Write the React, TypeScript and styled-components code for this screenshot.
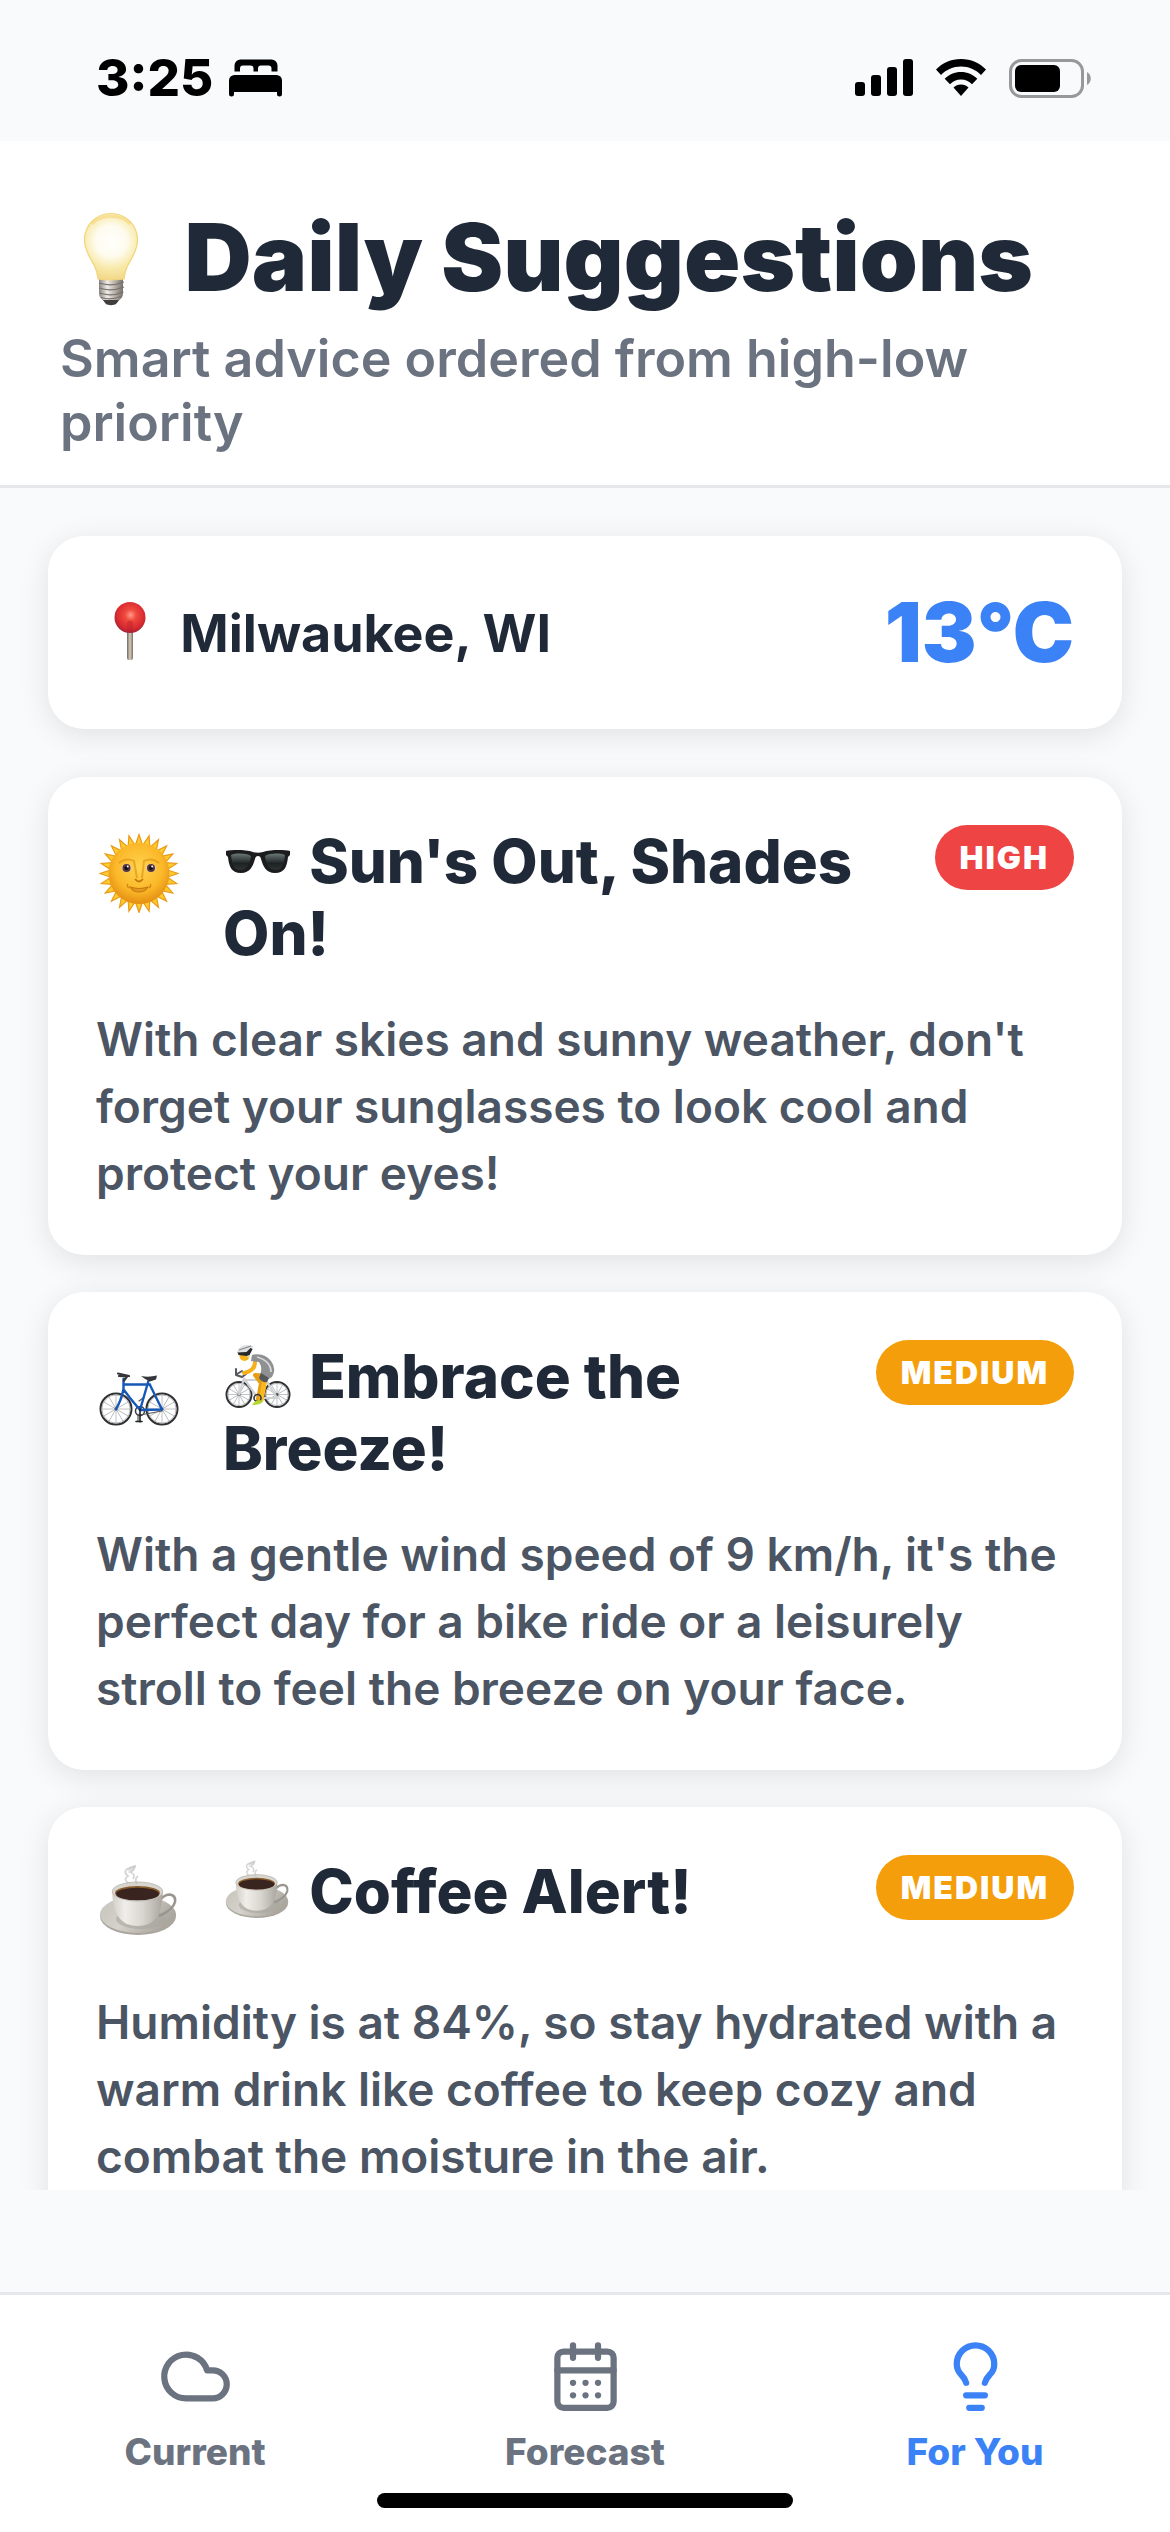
import React from "react";
import styled, { createGlobalStyle } from "styled-components";
import { CalendarDays, Cloud, Lightbulb } from "lucide-react";

const GlobalStyle = createGlobalStyle`
  *, *::before, *::after { box-sizing: border-box; }
  body {
    margin: 0;
    background: #f8fafc;
    font-family: Inter, "Noto Sans", sans-serif;
    color: #1f2937;
  }
  h1, h2, p, ul { margin: 0; padding: 0; }
`;

const Screen = styled.div`
  display: flex;
  flex-direction: column;
  height: 100vh;
  background: #f8fafc;
`;

/* ---------- status bar ---------- */

const StatusBar = styled.div`
  display: flex;
  align-items: center;
  justify-content: space-between;
  flex: none;
  height: 141px;
  padding: 15px 78px 0 96px;
  color: #000;
`;

const StatusGroup = styled.div<{ $gap: number }>`
  display: flex;
  align-items: center;
  gap: ${(p) => p.$gap}px;
`;

const Clock = styled.time`
  font-size: 51px;
  line-height: 60px;
  font-weight: 800;
`;

/* ---------- header ---------- */

const Header = styled.header`
  flex: none;
  padding: 58px 60px 30px;
  background: #fff;
  border-bottom: 3px solid #e5e7eb;
`;

const PageTitle = styled.h1`
  font-size: 93px;
  line-height: 116px;
  font-weight: 900;
`;

const Subtitle = styled.p`
  margin-top: 12px;
  font-size: 52px;
  line-height: 64px;
  font-weight: 600;
  color: #6b7280;
`;

/* ---------- content ---------- */

const Content = styled.main`
  flex: 1;
  min-height: 0;
  margin-bottom: 102px;
  padding: 48px;
  overflow-y: auto;
  scrollbar-width: none;
`;

const Panel = styled.section`
  padding: 48px;
  border-radius: 36px;
  background: #fff;
  box-shadow: 0 6px 30px rgba(0, 0, 0, 0.1);
`;

const LocationPanel = styled(Panel)`
  display: flex;
  align-items: center;
  justify-content: space-between;
  margin-bottom: 48px;
`;

const Place = styled.p`
  font-size: 52px;
  line-height: 64px;
  font-weight: 700;
`;

const Temperature = styled.p`
  font-size: 82px;
  line-height: 97px;
  font-weight: 900;
  color: #3b82f6;
`;

const Suggestions = styled.ul`
  display: flex;
  flex-direction: column;
  gap: 37px;
  list-style: none;
`;

const CardHead = styled.div`
  display: flex;
  align-items: flex-start;
  gap: 36px;
  margin-bottom: 37px;
`;

const CardIcon = styled.span`
  display: block;
  flex: none;
  padding: 8px 8px 9px 3px;

  svg { display: block; }
`;

const CardTitle = styled.h2`
  flex: 1;
  font-size: 60px;
  line-height: 72px;
  font-weight: 800;
`;

const Badge = styled.span<{ $color: string }>`
  flex: none;
  padding: 12px 25px;
  border-radius: 36px;
  background: ${(p) => p.$color};
  color: #fff;
  font-size: 32px;
  line-height: 41px;
  font-weight: 900;
  letter-spacing: 2px;
`;

const CardText = styled.p`
  font-size: 46px;
  line-height: 67px;
  font-weight: 600;
  color: #4b5563;
`;

const TitleEmoji = styled.svg<{ $drop: number }>`
  vertical-align: -${(p) => p.$drop}px;
`;

/* ---------- tab bar ---------- */

const TabBar = styled.nav`
  flex: none;
  background: #fff;
  border-top: 3px solid #e5e7eb;
`;

const Tabs = styled.div`
  display: grid;
  grid-template-columns: repeat(3, 1fr);
  padding-top: 44px;
`;

const Tab = styled.a<{ $active?: boolean }>`
  display: flex;
  flex-direction: column;
  align-items: center;
  gap: 16px;
  color: ${(p) => (p.$active ? "#3b82f6" : "#6b7280")};
  font-size: 37px;
  line-height: 44px;
  font-weight: 800;
  text-decoration: none;
`;

const HomeIndicator = styled.div`
  width: 416px;
  height: 15px;
  margin: 19px auto 24px;
  border-radius: 8px;
  background: #000;
`;

/* ---------- status glyphs ---------- */

const BedGlyph = () => (
  <svg width="53" height="38" viewBox="0 0 53 38" aria-hidden="true">
    <path d="M5.500 12.500V6.500a6 6 0 0 1 6-6h31a6 6 0 0 1 6 6v6h-6V9.500a3 3 0 0 0-3-3h-7.500a3 3 0 0 0-3 3v3h-4.500V9.500a3 3 0 0 0-3-3h-7.500a3 3 0 0 0-3 3v3z" />
    <path d="M0 21.500a5.500 5.500 0 0 1 5.500-5.500h42a5.500 5.500 0 0 1 5.500 5.500V35a2.500 2.500 0 0 1-5 0v-2H5v2a2.500 2.500 0 0 1-5 0z" />
  </svg>
);

const SignalGlyph = () => (
  <svg width="58" height="38" viewBox="0 0 58 38" aria-hidden="true">
    <rect x="0" y="23" width="10" height="14" rx="3" />
    <rect x="16" y="16" width="10" height="21" rx="3" />
    <rect x="32" y="8" width="10" height="29" rx="3" />
    <rect x="48" y="0" width="10" height="37" rx="3" />
  </svg>
);

const WifiGlyph = () => (
  <svg width="50" height="38" viewBox="0 0 50 38" aria-hidden="true">
    <path d="M25 0C35 0 43.500 4 50 10.500L45 16C39.500 10.500 33 7.500 25 7.500S10.500 10.500 5 16L0 10.500C6.500 4 15 0 25 0z" />
    <path d="M25 13c6.500 0 12 2.500 16.300 6.700L36 25.200c-3-3-6.500-4.700-11-4.700s-8 1.700-11 4.700l-5.300-5.500C13 15.500 18.500 13 25 13z" />
    <path d="M25 25.500c3 0 5.500 1 7.500 3L25 37l-7.500-8.500c2-2 4.500-3 7.500-3z" />
  </svg>
);

const BatteryGlyph = () => (
  <svg width="83" height="39" viewBox="0 0 83 39" aria-hidden="true">
    <rect x="1.500" y="1.500" width="72" height="36" rx="11" fill="none" stroke="#979899" strokeWidth="3" />
    <rect x="6" y="6" width="45" height="27" rx="6" />
    <path d="M78 13c5 2.500 5 10.500 0 13z" fill="#979899" />
  </svg>
);

/* ---------- emoji drawings ---------- */

const BulbEmoji = () => (
  <TitleEmoji $drop={16} width="106" height="96" viewBox="0 0 106 96" aria-hidden="true">
    <defs>
      <radialGradient id="glass" cx="51" cy="30" r="38" gradientUnits="userSpaceOnUse">
        <stop offset="0" stopColor="#fffefa" />
        <stop offset="0.4" stopColor="#fefcf0" />
        <stop offset="0.72" stopColor="#f8eaab" />
        <stop offset="1" stopColor="#f3d98a" />
      </radialGradient>
      <linearGradient id="screw" x1="0" x2="1">
        <stop offset="0" stopColor="#8b857f" />
        <stop offset="0.35" stopColor="#f0ece8" />
        <stop offset="0.65" stopColor="#b9b2ab" />
        <stop offset="1" stopColor="#77716c" />
      </linearGradient>
    </defs>
    <path d="M42 88h18l-4 5c-2 1.500-8 1.500-10 0z" fill="#3f3d3d" />
    <path d="M39 66h24v16c0 4-2 6-4 7H43c-2-1-4-3-4-7z" fill="url(#screw)" />
    <path d="M39 72q12 4 25-1M39 77q12 4 25-1M39.500 82q12 4 24-1M41 86.500q10 3 20-1" fill="none" stroke="#77716d" strokeWidth="1.300" />
    <path
      d="M51 2.500C66 2.500 77.500 14 77.500 29c0 11-6 18-10 26-2.500 5-3 9-3.500 13-7 1-19 1-26 0-.5-4-1-8-3.500-13-4-8-10-15-10-26C24.500 14 36 2.500 51 2.500z"
      fill="url(#glass)"
      stroke="#f2d57c"
      strokeWidth="1.200"
    />
    <path d="M32 13c8-10 30-10 38 0" fill="none" stroke="#f5cf6c" strokeWidth="3" opacity="0.45" />
  </TitleEmoji>
);

const PinEmoji = () => (
  <TitleEmoji $drop={10} width="72" height="62" viewBox="0 0 72 62" aria-hidden="true">
    <defs>
      <radialGradient id="pinHead" cx="0.52" cy="0.42" r="0.6">
        <stop offset="0" stopColor="#ff9a86" />
        <stop offset="0.3" stopColor="#f04a3f" />
        <stop offset="0.75" stopColor="#d8292f" />
        <stop offset="1" stopColor="#9c2338" />
      </radialGradient>
      <linearGradient id="needle" x1="0" x2="1">
        <stop offset="0" stopColor="#6d6862" />
        <stop offset="0.5" stopColor="#dccbbb" />
        <stop offset="1" stopColor="#77706a" />
      </linearGradient>
    </defs>
    <rect x="31" y="30" width="6" height="30" rx="2" fill="url(#needle)" />
    <circle cx="34" cy="17.500" r="15.500" fill="url(#pinHead)" />
    <path d="M31 32V22q3-3 6 0v10z" fill="#b9202f" opacity="0.45" />
  </TitleEmoji>
);

const RAYS = Array.from({ length: 24 }, (_, i) => {
  const at = (angle: number, radius: number) =>
    `${(40 + Math.sin(angle) * radius).toFixed(2)},${(40.5 - Math.cos(angle) * radius).toFixed(2)}`;
  const mid = (i * Math.PI) / 12;
  return `${at(mid - 0.12, 29)} ${at(mid, 39)} ${at(mid + 0.12, 29)}`;
});

const SunEmoji = () => (
  <svg width="80" height="80" viewBox="0 0 80 80" aria-hidden="true">
    <defs>
      <radialGradient id="sunFace" cx="0.5" cy="0.4" r="0.6">
        <stop offset="0" stopColor="#ffd34e" />
        <stop offset="0.65" stopColor="#fbb829" />
        <stop offset="1" stopColor="#e58e12" />
      </radialGradient>
    </defs>
    {RAYS.map((points) => (
      <polygon key={points} points={points} fill="#fdcb2e" stroke="#e99a17" strokeWidth="1.200" />
    ))}
    <circle cx="40" cy="40.500" r="30.500" fill="url(#sunFace)" />
    <path d="M20 30q7-6 15-2l3 17M60 30q-7-6-15-2l-2 17" fill="none" stroke="#db8e12" strokeWidth="2" opacity="0.6" />
    <path d="M36 46q4 5 8 0" fill="none" stroke="#c97a0c" strokeWidth="1.800" />
    <path d="M31 54q9 3 18 0-3 5-9 5t-9-5z" fill="#e29a25" stroke="#c97a0c" strokeWidth="1.200" />
    <path d="M29 51q-2 2 1 4M51 51q2 2-1 4" fill="none" stroke="#d48710" strokeWidth="1.200" />
    {[27.5, 52].map((x) => (
      <g key={x}>
        <ellipse cx={x} cy="35" rx="5.200" ry="4.300" fill="#e6c9a8" />
        <circle cx={x} cy="35" r="4" fill="#54363a" />
        <circle cx={x} cy="35" r="2" fill="#150d12" />
        <circle cx={x + 1.2} cy="33.500" r="1" fill="#fff" />
      </g>
    ))}
  </svg>
);

const ShadesEmoji = () => (
  <TitleEmoji $drop={10} width="73" height="64" viewBox="0 0 73 64" aria-hidden="true">
    <defs>
      <linearGradient id="lens" x1="0" y1="0" x2="0" y2="1">
        <stop offset="0" stopColor="#6b7675" />
        <stop offset="0.6" stopColor="#1d2223" />
        <stop offset="1" stopColor="#2d3333" />
      </linearGradient>
    </defs>
    <path
      d="M3 22c6-1.500 20-1.500 27 1q5 1.500 10 0c7-2.500 21-2.500 27-1v4l-2 2c-1 9-3 16-13 16-9 0-12-7-14-14q-.5-3-3-3t-3 3c-2 7-5 14-14 14-10 0-12-7-13-16l-2-2z"
      fill="#1c1c1e"
    />
    <path d="M8 26c5-2 15-2 20 1-1 8-4 14-11 14s-8-7-9-15zM62 26c-5-2-15-2-20 1 1 8 4 14 11 14s8-7 9-15z" fill="url(#lens)" />
  </TitleEmoji>
);

const Wheel = ({ cx, cy, r }: { cx: number; cy: number; r: number }) => (
  <g fill="none">
    <circle cx={cx} cy={cy} r={r - 1} stroke="#2f3032" strokeWidth="2" />
    <circle cx={cx} cy={cy} r={r - 2.4} stroke="#a3a5a7" strokeWidth="0.800" />
    {[0, 30, 60, 90, 120, 150].map((deg) => (
      <path
        key={deg}
        d={`M${cx - r + 2} ${cy}H${cx + r - 2}`}
        transform={`rotate(${deg} ${cx} ${cy})`}
        stroke="#9a9c9f"
        strokeWidth="0.600"
      />
    ))}
    <circle cx={cx} cy={cy} r="1.500" fill="#55575a" />
  </g>
);

const BikeEmoji = () => (
  <svg width="80" height="80" viewBox="0 0 80 80" aria-hidden="true">
    <Wheel cx={17} cy={61} r={16.5} />
    <Wheel cx={63} cy={61} r={16.5} />
    <g fill="none" strokeLinecap="round" strokeLinejoin="round">
      <circle cx="41" cy="63" r="4.500" stroke="#3b3c3f" strokeWidth="1.500" />
      <path d="M41 67L63 63M39 66v7M44 50l-4 3" stroke="#55575a" strokeWidth="1.200" />
      <path d="M17 61q5-8 7.500-20V31M25 36.500h26M25 42l6 8 10 12L50 31M51 37l12 24.500-22 .5" stroke="#1558b7" strokeWidth="2.400" />
      <path d="M41 61v13M37 73.500h6" stroke="#1f2022" strokeWidth="1.600" />
      <path d="M19 25.500l11 2.500M20 28l8 .5-3 4" stroke="#35363a" strokeWidth="2.200" />
    </g>
    <path d="M42 28q8 1.500 16-.5l-1 4-6 2q-5-2-9-5.500z" fill="#35363a" />
  </svg>
);

const CyclistEmoji = () => (
  <TitleEmoji $drop={10} width="73" height="64" viewBox="0 0 73 64" aria-hidden="true">
    <Wheel cx={16} cy={50.5} r={13.5} />
    <Wheel cx={54} cy={50.5} r={13.5} />
    <g fill="none" strokeLinecap="round" strokeLinejoin="round">
      <path d="M16 50.500l5-16M22 36l12 17 10-17zM34 54h20L43 36" stroke="#cfd2d5" strokeWidth="2.200" />
      <path d="M13 25v6l6 2 4-3M14 30l5-3" stroke="#55585c" strokeWidth="2" />
      <path d="M32 18q0 9-11 11" stroke="#f5b01c" strokeWidth="4" />
      <path d="M45 32l-13-1 6 8-3 17" stroke="#e79c12" strokeWidth="4" />
      <path d="M42 33q-1 10-4 23" stroke="#fbb91f" strokeWidth="5" />
    </g>
    <circle cx="34.500" cy="54" r="3.500" fill="none" stroke="#38393c" strokeWidth="1.600" />
    <path d="M29 11q12-3 19 6 6 8 1 16l-5 3-7-5q3-7-1-13l-8-1z" fill="#8e9092" />
    <path d="M34 13q14 4 14 15" fill="none" stroke="#d6d8d9" strokeWidth="1.800" />
    <path d="M38 29l8 5-2 4q-5 1-8-4z" fill="#55575a" />
    <circle cx="21.500" cy="12" r="5" fill="#f8b21c" />
    <path d="M14 9C15 2 22-.5 30 2q0 6-3 8l-1 4-4-4z" fill="#dfe1e3" />
    <path d="M14.500 8.500l9-.5 4-4 2 1-3 6-3 1-8-1z" fill="#26272a" />
    <path d="M16 6l12-4" stroke="#85888b" strokeWidth="1.200" />
    <path d="M29 61q2-4 7-5l4 1q-1 4-11 4z" fill="#b6d832" />
  </TitleEmoji>
);

const CoffeeArt = ({ id }: { id: string }) => (
  <>
    <defs>
      <linearGradient id={`${id}-cup`} x1="0" x2="1">
        <stop offset="0" stopColor="#d2cec7" />
        <stop offset="0.25" stopColor="#f0eeea" />
        <stop offset="0.6" stopColor="#d9d6d0" />
        <stop offset="1" stopColor="#aaa69f" />
      </linearGradient>
      <linearGradient id={`${id}-saucer`} x1="0" y1="0" x2="1" y2="0.400">
        <stop offset="0" stopColor="#c6c3bb" />
        <stop offset="0.5" stopColor="#d5d2cb" />
        <stop offset="1" stopColor="#aba79f" />
      </linearGradient>
    </defs>
    <ellipse cx="39" cy="53" rx="38" ry="19" fill="#aaa69d" />
    <ellipse cx="39" cy="51.500" rx="38" ry="18.500" fill={`url(#${id}-saucer)`} />
    <ellipse cx="42" cy="56" rx="25" ry="10" fill="#a9a69f" opacity="0.600" />
    <path d="M62 36q4-4.500 9-4.500 6 1 5 7.500-2 8-16 14" fill="none" stroke="#99958f" strokeWidth="2.600" />
    <path d="M13.300 29h50.400c0 15-4 27-14 32q-11 4-22 0c-10-5-14.400-17-14.400-32z" fill={`url(#${id}-cup)`} />
    <ellipse cx="38.500" cy="28.500" rx="25.200" ry="9.500" fill="#d8d5cf" stroke="#b5b1aa" strokeWidth="0.800" />
    <ellipse cx="38.500" cy="30" rx="22.500" ry="7" fill="#875a2b" />
    <ellipse cx="38.500" cy="31" rx="21.500" ry="6.300" fill="#3a2420" />
    <path d="M29 20q-5-4 0-7-5-4-1-7 5-2 8-3-1 5-5 6 6 2 3 7M38 21q-3-5 1-8" fill="none" stroke="#b9b9b9" strokeWidth="1.800" opacity="0.600" />
    <path d="M28 7q4-5 9-4-3 5-6 5z" fill="#bfbfbf" opacity="0.500" />
  </>
);

const CoffeeEmoji = () => (
  <svg width="80" height="80" viewBox="0 0 80 80" aria-hidden="true">
    <CoffeeArt id="mug-large" />
  </svg>
);

const SmallCoffeeEmoji = () => (
  <TitleEmoji $drop={10} width="73" height="64" viewBox="0 0 73 64" aria-hidden="true">
    <g transform="translate(2 0) scale(0.82)">
      <CoffeeArt id="mug-small" />
    </g>
  </TitleEmoji>
);

/* ---------- data ---------- */

const PRIORITY_COLORS = { HIGH: "#ef4444", MEDIUM: "#f59e0b" };

type Suggestion = {
  icon: React.ReactNode;
  titleIcon: React.ReactNode;
  title: string;
  priority: keyof typeof PRIORITY_COLORS;
  text: string;
};

const SUGGESTIONS: Suggestion[] = [
  {
    icon: <SunEmoji />,
    titleIcon: <ShadesEmoji />,
    title: "Sun's Out, Shades On!",
    priority: "HIGH",
    text: "With clear skies and sunny weather, don't forget your sunglasses to look cool and protect your eyes!",
  },
  {
    icon: <BikeEmoji />,
    titleIcon: <CyclistEmoji />,
    title: "Embrace the Breeze!",
    priority: "MEDIUM",
    text: "With a gentle wind speed of 9 km/h, it's the perfect day for a bike ride or a leisurely stroll to feel the breeze on your face.",
  },
  {
    icon: <CoffeeEmoji />,
    titleIcon: <SmallCoffeeEmoji />,
    title: "Coffee Alert!",
    priority: "MEDIUM",
    text: "Humidity is at 84%, so stay hydrated with a warm drink like coffee to keep cozy and combat the moisture in the air.",
  },
];

export default function App() {
  return (
    <Screen>
      <GlobalStyle />
      <StatusBar>
        <StatusGroup $gap={16}>
          <Clock>3:25</Clock>
          <BedGlyph />
        </StatusGroup>
        <StatusGroup $gap={23}>
          <SignalGlyph />
          <WifiGlyph />
          <BatteryGlyph />
        </StatusGroup>
      </StatusBar>

      <Header>
        <PageTitle>
          <BulbEmoji /> Daily Suggestions
        </PageTitle>
        <Subtitle>Smart advice ordered from high-low priority</Subtitle>
      </Header>

      <Content>
        <LocationPanel>
          <Place>
            <PinEmoji /> Milwaukee, WI
          </Place>
          <Temperature>13°C</Temperature>
        </LocationPanel>

        <Suggestions>
          {SUGGESTIONS.map((item) => (
            <Panel as="li" key={item.title}>
              <CardHead>
                <CardIcon>{item.icon}</CardIcon>
                <CardTitle>
                  {item.titleIcon} {item.title}
                </CardTitle>
                <Badge $color={PRIORITY_COLORS[item.priority]}>{item.priority}</Badge>
              </CardHead>
              <CardText>{item.text}</CardText>
            </Panel>
          ))}
        </Suggestions>
      </Content>

      <TabBar>
        <Tabs>
          <Tab href="#current">
            <Cloud size={75} />
            Current
          </Tab>
          <Tab href="#forecast">
            <CalendarDays size={75} />
            Forecast
          </Tab>
          <Tab href="#for-you" $active aria-current="page">
            <Lightbulb size={75} />
            For You
          </Tab>
        </Tabs>
        <HomeIndicator />
      </TabBar>
    </Screen>
  );
}
